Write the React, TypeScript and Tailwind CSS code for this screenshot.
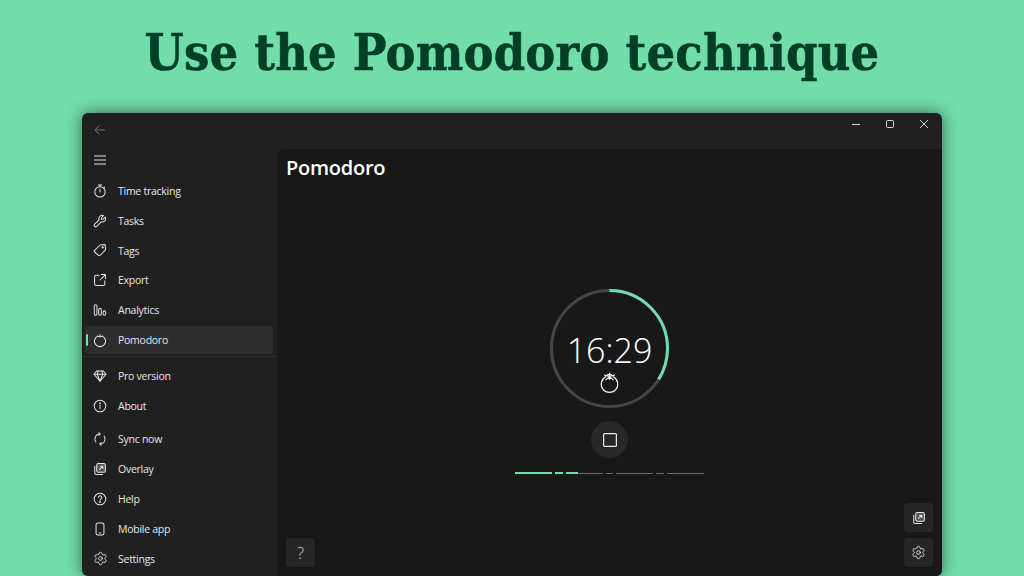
import React from "react";
import { Settings } from "lucide-react";

const S = ({ children, size = 14 }: { children: React.ReactNode; size?: number }) => (
  <svg width={size} height={size} viewBox="0 0 16 16" fill="none" stroke="#e4e4e4" strokeWidth="1.150" strokeLinecap="round" strokeLinejoin="round">
    {children}
  </svg>
);

const Timer = () => (<S><circle cx="8" cy="9" r="5.900" /><path d="M6 1.200h4M8 1.200v2M8 9V6M13.300 3.500l-1 1" /></S>);
const Wrench = () => (<S><path d="M14 3.600l-2.600 2.500-1.700-.1-.2-1.700L12 1.800A3.800 3.800 0 0 0 7 6.600L1.900 11.600a1.700 1.700 0 0 0 2.500 2.500L9.400 9a3.800 3.800 0 0 0 4.600-5.400z" /></S>);
const Tag = () => (<S><path d="M1.600 8.600L8 2.300 13.800 1.800 14.300 7.800 8 14.300a1 1 0 0 1-1.400 0L1.600 10a1 1 0 0 1 0-1.400z" /><circle cx="11" cy="5" r=".7" fill="#e4e4e4" /></S>);
const Export = () => (<S><path d="M7 2.500H3.500A1.700 1.700 0 0 0 1.800 4.200v8.300a1.700 1.700 0 0 0 1.700 1.700h8.300a1.700 1.700 0 0 0 1.700-1.700V9" /><path d="M9.500 1.800h4.700v4.700M14.200 1.800L8 8" /></S>);
const Bars = () => (<S><rect x="1.500" y="2" width="3" height="12" rx="1.500" /><rect x="6.500" y="6" width="3" height="8" rx="1.500" /><rect x="11.500" y="9" width="3" height="5" rx="1.500" /></S>);
const Tomato = ({ size = 14, big }: { size?: number; big?: boolean }) => (
  <svg width={size} height={size} viewBox="0 0 16 16" fill="none" stroke="#f0f0f0" strokeWidth={big ? 0.9 : 1.150} strokeLinecap="round" strokeLinejoin="round">
    <path d="M5.200 3.600A6.300 6.300 0 1 0 10.800 3.600" />
    {big ? (
      <path d="M8 5.500L8 .8M8 3.400L4.300 2.400M8 3.400L11.700 2.400M8 3.600L5.200 6M8 3.600L10.800 6M6.500 2L9.500 2" />
    ) : (
      <path d="M5.200 3.600C6.500 4.600 9.500 4.600 10.800 3.600M8 4.200V1.800" />
    )}
  </svg>
);
const Gem = () => (<S><path d="M4.300 2.200h7.400L14.800 6 8 14 1.200 6z" /><path d="M1.200 6h13.600M6 2.200L5 6l3 8 3-8-1-3.800" /></S>);
const Info = () => (<S><circle cx="8" cy="8" r="6.600" /><path d="M8 7.300v3.600" /><circle cx="8" cy="5" r=".5" fill="#e4e4e4" /></S>);
const Sync = () => (<S><path d="M3.300 11.500A5.800 5.800 0 0 1 6.500 2.400M12.700 4.500A5.800 5.800 0 0 1 9.500 13.600" /><path d="M6.800 .8L8.200 2.400 6.500 3.800M9.200 15.200L7.800 13.600 9.500 12.200" /></S>);
const Overlay = ({ size = 14 }: { size?: number }) => (
  <S size={size}>
    <path d="M2 5v7.500A1.800 1.800 0 0 0 3.800 14.300H11" />
    <rect x="4.200" y="1.800" width="10" height="10" rx="1.800" fill="#555" />
    <path d="M7.500 8.500L11 5M8.500 4.800H11.200V7.500" />
  </S>
);
const Help = () => (<S><circle cx="8" cy="8" r="6.600" /><path d="M6.200 6.300a1.900 1.900 0 1 1 3 1.500c-.7.500-1.200.9-1.200 1.700" /><circle cx="8" cy="11.500" r=".5" fill="#e4e4e4" /></S>);
const Phone = () => (<S><rect x="3.500" y="1.200" width="9" height="13.600" rx="1.800" /><path d="M7 12.500h2" /></S>);
const Gear = ({ size = 15 }: { size?: number }) => <Settings size={size} color="#f0f0f0" strokeWidth={1.3} />;

const Row = ({ icon, label, active, tight }: { icon: React.ReactNode; label: string; active?: boolean; tight?: boolean }) => (
  <div className={`${tight ? "h-[29.8px]" : "h-[30px]"} flex items-center pl-[3px] pr-[4px]`}>
    <div className={`relative flex-1 h-[28px] flex items-center gap-[10px] pl-[7px] rounded-[4px] ${active ? "bg-[#2d2d2d]" : ""}`}>
      {active && <span className="absolute left-[1px] top-[8px] h-[12px] w-[2px] rounded-full bg-[#72dcab]" />}
      <span className="w-[16px] h-[16px] flex items-center justify-center">{icon}</span>
      <span className="pt-[2px] text-[10.5px] tracking-[-0.26px] text-[#e6e6e6]">{label}</span>
    </div>
  </div>
);

const Square = ({ children }: { children: React.ReactNode }) => (
  <div className="w-[29px] h-[29px] rounded-[4px] bg-[#262626] flex items-center justify-center">{children}</div>
);

const Seg = ({ w, on }: { w: number; on?: boolean }) => (
  <span className={on ? "h-[2px] bg-[#72dcab]" : "h-px bg-[#6a6a6a]"} style={{ width: w }} />
);

const R = 58;
const C = 2 * Math.PI * R;

export default function App() {
  return (
    <div className="w-[1024px] h-[576px] overflow-hidden bg-[#72dcab] flex flex-col" style={{ fontFamily: '"Open Sans", sans-serif' }}>
      <h1 className="h-[113px] pt-[20px] text-center text-[#033f27] text-[50px] leading-[66px] font-bold tracking-[0.2px] [-webkit-text-stroke:0.5px_#033f27]" style={{ fontFamily: '"DejaVu Serif Condensed", "Liberation Serif", serif' }}>
        Use the Pomodoro technique
      </h1>
      <div className="mx-[82px] h-[463px] flex bg-[#202020] rounded-[6px] overflow-hidden shadow-[0_0_16px_rgba(0,0,0,0.55)]">
        <aside className="w-[195px] shrink-0 flex flex-col">
          <div className="h-[32px] pt-[9px] pl-[12px] flex items-start">
            <svg width="12" height="12" viewBox="0 0 12 12" fill="none" stroke="#6e6e6e" strokeWidth="1" className="mt-[2px]"><path d="M11 6H1M5.500 1.500L1 6l4.500 4.500" /></svg>
          </div>
          <div className="h-[31px] pl-[12px] pb-[2px] flex items-center">
            <svg width="12" height="10" viewBox="0 0 12 10" fill="none" stroke="#e4e4e4" strokeWidth="1"><path d="M0 1h12M0 5h12M0 9h12" /></svg>
          </div>
          <Row tight icon={<Timer />} label="Time tracking" />
          <Row tight icon={<Wrench />} label="Tasks" />
          <Row tight icon={<Tag />} label="Tags" />
          <Row tight icon={<Export />} label="Export" />
          <Row tight icon={<Bars />} label="Analytics" />
          <Row tight icon={<Tomato />} label="Pomodoro" active />
          <div className="h-px bg-[#2d2d2d] mt-[1.200px] mb-[4px]" />
          <Row icon={<Gem />} label="Pro version" />
          <Row icon={<Info />} label="About" />
          <div className="h-[3px]" />
          <Row icon={<Sync />} label="Sync now" />
          <Row icon={<Overlay />} label="Overlay" />
          <Row icon={<Help />} label="Help" />
          <Row icon={<Phone />} label="Mobile app" />
          <Row icon={<Gear />} label="Settings" />
        </aside>
        <div className="flex-1 flex flex-col min-w-0">
          <div className="h-[36px] flex items-start justify-end">
            <div className="w-[34px] h-[22px] flex items-center justify-center">
              <svg width="10" height="10" viewBox="0 0 10 10" stroke="#d8d8d8" strokeWidth="1"><path d="M1 5.500h8" /></svg>
            </div>
            <div className="w-[34px] h-[22px] flex items-center justify-center">
              <svg width="10" height="10" viewBox="0 0 10 10" fill="none" stroke="#d8d8d8" strokeWidth="1"><rect x="1.500" y="1.500" width="7" height="7" rx="1" /></svg>
            </div>
            <div className="w-[34px] h-[22px] mr-px flex items-center justify-center">
              <svg width="10" height="10" viewBox="0 0 10 10" stroke="#d8d8d8" strokeWidth="1"><path d="M1 1l8 8M9 1L1 9" /></svg>
            </div>
          </div>
          <main className="flex-1 bg-[#181818] rounded-tl-[6px] flex flex-col min-h-0">
            <div className="h-[38px] pl-[9px] flex items-center text-[20px] font-semibold tracking-[-0.25px] text-white">Pomodoro</div>
            <div className="mt-[102px] flex flex-col items-center">
              <div className="relative w-[119px] h-[119px]">
                <svg width="119" height="119" viewBox="0 0 119 119" fill="none" className="-rotate-90">
                  <circle cx="59.500" cy="59.500" r={R} stroke="#464646" strokeWidth="3" />
                  <circle cx="59.500" cy="59.500" r={R} stroke="#72dcab" strokeWidth="3" strokeDasharray={`${(C * 122) / 360} ${C}`} />
                </svg>
                <div className="absolute inset-0 flex flex-col items-center">
                  <span className="mt-[37px] h-[48px] text-[34px] leading-[48px] font-light text-white">16:29</span>
                  <span className="-mt-[2px]"><Tomato size={21} big /></span>
                </div>
              </div>
              <div className="mt-[13px] w-[37px] h-[37px] rounded-full bg-[#282828] flex items-center justify-center">
                <svg width="14" height="14" viewBox="0 0 14 14" fill="none" stroke="#e8e8e8" strokeWidth="1.200"><rect x=".6" y=".6" width="12.800" height="12.800" rx="1" /></svg>
              </div>
              <div className="mt-[14px] h-[2px] flex items-center gap-[3px]">
                <Seg w={37} on />
                <Seg w={8} on />
                <div className="flex items-center">
                  <Seg w={12} on />
                  <Seg w={25} />
                </div>
                <Seg w={7} />
                <Seg w={37} />
                <Seg w={8} />
                <Seg w={37} />
              </div>
            </div>
            <div className="flex-1 flex items-end justify-between px-[9px] pb-[9px]">
              <Square><span className="text-[16px] text-[#cfcfcf] font-light">?</span></Square>
              <div className="flex flex-col gap-[6px]">
                <Square><Overlay size={14} /></Square>
                <Square><Gear size={15} /></Square>
              </div>
            </div>
          </main>
        </div>
      </div>
    </div>
  );
}
